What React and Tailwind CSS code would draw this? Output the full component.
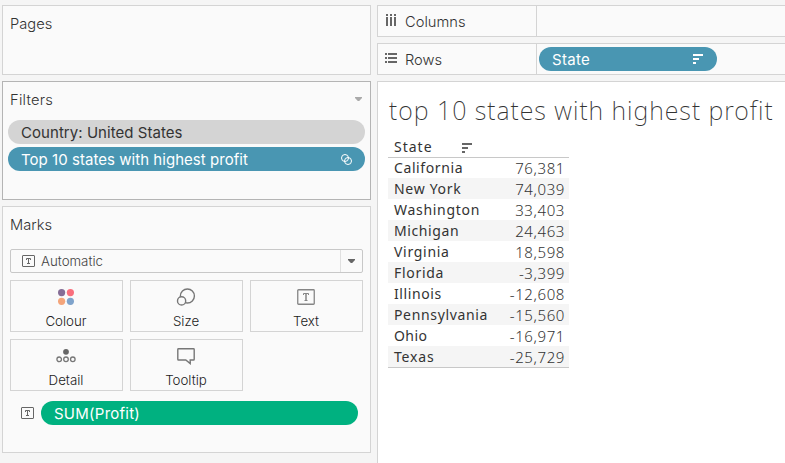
import React from "react";

const rows = [
  ["California", "76,381", "tracking-[0.6px]"],
  ["New York", "74,039", "tracking-[0.7px]"],
  ["Washington", "33,403", "tracking-[0.7px]"],
  ["Michigan", "24,463", "tracking-[0.6px]"],
  ["Virginia", "18,598", "tracking-[0.7px]"],
  ["Florida", "-3,399", "tracking-[0.7px]"],
  ["Illinois", "-12,608", "tracking-[0.6px]"],
  ["Pennsylvania", "-15,560", "tracking-[0.65px]"],
  ["Ohio", "-16,971", "tracking-[0.4px]"],
  ["Texas", "-25,729", "tracking-[0.8px]"],
];

function TextIcon() {
  return (
    <svg width="13" height="12" viewBox="0 0 13 12" fill="none" stroke="#666" className="shrink-0">
      <rect x="0.5" y="0.5" width="12" height="11" rx="0.5" />
      <path d="M4.5 5V3.5H8.5V5M6.5 3.5V8.5M5 8.5H8" />
    </svg>
  );
}

function BigTextIcon() {
  return (
    <svg width="18" height="16" viewBox="0 0 18 16" fill="none" stroke="#858585">
      <rect x="0.75" y="0.75" width="16.5" height="14.5" rx="0.8" strokeWidth="1.3" />
      <path d="M6.5 6V4.5H11.5V6M7.5 11.5H10.5" />
      <path d="M9 4.5V11.5" strokeWidth="1.5" />
    </svg>
  );
}

function SortIcon({ color, className = "" }) {
  return (
    <svg width="10" height="10" viewBox="0 0 10 10" fill={color} className={`shrink-0 ${className}`} shapeRendering="crispEdges">
      <path d="M0 0h10v2H0zM0 4h6v2H0zM0 8h3v2H0z" />
    </svg>
  );
}

function ColourIcon() {
  return (
    <svg width="18" height="18" viewBox="0 0 18 18">
      <circle cx="4.6" cy="4.6" r="3.6" fill="#856d96" />
      <circle cx="13.4" cy="4.6" r="3.6" fill="#f96f7d" />
      <circle cx="4.6" cy="13.3" r="3.6" fill="#f4a57b" />
      <circle cx="13.4" cy="13.3" r="3.6" fill="#7fa3cb" />
    </svg>
  );
}

function SizeIcon() {
  return (
    <svg width="20" height="18" viewBox="0 0 20 18" stroke="#777" strokeWidth="1.4" fill="#fafafa">
      <circle cx="11.4" cy="8" r="7" />
      <circle cx="5.6" cy="12.9" r="4.1" />
    </svg>
  );
}

function DetailIcon() {
  return (
    <svg width="20" height="16" viewBox="0 0 20 16" fill="none" stroke="#777" strokeWidth="1.3">
      <circle cx="10" cy="3.8" r="2.9" fill="#666" stroke="none" />
      <circle cx="3.2" cy="11.3" r="2.3" />
      <circle cx="10" cy="11.3" r="2.3" />
      <circle cx="16.8" cy="11.3" r="2.3" />
    </svg>
  );
}

function TooltipIcon() {
  return (
    <svg width="18" height="17" viewBox="0 0 18 17" fill="none" stroke="#777" strokeWidth="1.4">
      <path d="M1.5 0.8H16.5Q17.2 .8 17.2 1.5V11.2Q17.2 12 16.5 12H13.2V15.6L8.8 12H1.5Q.8 12 .8 11.2V1.5Q.8 .8 1.5 .8Z" />
    </svg>
  );
}

function ColumnsIcon() {
  return (
    <svg width="10" height="12" viewBox="0 0 10 12" fill="#666" shapeRendering="crispEdges" className="-mt-0.5">
      <path d="M0 0h2v2H0zM4 0h2v2H4zM8 0h2v2H8zM0 3h2v9H0zM4 3h2v9H4zM8 3h2v9H8z" />
    </svg>
  );
}

function RowsIcon() {
  return (
    <svg width="12" height="10" viewBox="0 0 12 10" fill="#666" shapeRendering="crispEdges" className="-mt-0.5">
      <path d="M0 0h2v2H0zM0 4h2v2H0zM0 8h2v2H0zM3 0h9v2H3zM3 4h9v2H3zM3 8h9v2H3z" />
    </svg>
  );
}

function Caret({ color }) {
  return (
    <svg width="7" height="4" viewBox="0 0 7 4" fill={color} className="shrink-0">
      <path d="M0 0H7V1L4.2 4H2.8L0 1Z" />
    </svg>
  );
}

function MarkButton({ icon, label }) {
  return (
    <div className="flex h-[52px] flex-col items-center border border-[#d4d4d4] pr-px">
      <div className="flex h-8 w-full items-center justify-center">{icon}</div>
      <div className="text-[13.3px] font-[350] leading-4 text-[#222]">{label}</div>
    </div>
  );
}

export default function App() {
  return (
    <div className="flex h-[463px] w-[785px] gap-1.5 overflow-hidden bg-[#f5f5f5] pl-0.5 pt-[5px] font-['Inter',sans-serif] whitespace-nowrap text-[#333]">
      <aside className="flex w-[369px] shrink-0 flex-col gap-1.5">
        <section className="h-[70px] border border-[#d4d4d4] bg-[#fafafa] pl-[7px] pt-2">
          <h2 className="text-[14.7px] font-light leading-5">Pages</h2>
        </section>

        <section className="h-[119px] border border-[#b4b4b4] bg-[#fafafa] px-[5px] pt-2">
          <div className="flex h-[30px] items-start justify-between pl-0.5 pr-[3px]">
            <h2 className="text-[14.7px] font-light leading-5 tracking-[0.25px]">Filters</h2>
            <div className="pt-[7px]"><Caret color="#aaa" /></div>
          </div>
          <div className="flex flex-col gap-[3px]">
            <div className="flex h-6 items-center rounded-full bg-[#d4d4d4] pl-[13px] text-[15px] font-[420] tracking-[0.05px]">
              <span className="pt-0.5">Country: United States</span>
            </div>
            <div className="flex h-6 items-center justify-between rounded-full bg-[#4996b2] pl-[13px] pr-[13px] text-[15px] font-[420] tracking-[0.04px] text-white">
              <span className="pt-0.5">Top 10 states with highest profit</span>
              <svg width="11" height="11" viewBox="0 0 11 11" fill="none" stroke="#fff" strokeWidth="1">
                <circle cx="4" cy="4" r="3.5" />
                <circle cx="7" cy="7" r="3.5" />
              </svg>
            </div>
          </div>
        </section>

        <section className="h-[247px] border border-[#d4d4d4] bg-[#fafafa] px-[7px] pt-2">
          <h2 className="text-[14.7px] font-light leading-5">Marks</h2>
          <div className="mt-3.5 flex h-6 items-center rounded-[2px] border border-[#c8c8c8] pl-[11px]">
            <TextIcon />
            <span className="ml-1.5 flex-1 text-[13.3px] font-light leading-5 text-[#444]">Automatic</span>
            <div className="flex h-full w-[22px] items-center justify-center border-l border-[#e0e0e0]"><Caret color="#666" /></div>
          </div>
          <div className="mt-[7px] grid grid-cols-[113px_113px_113px] gap-[7px]">
            <MarkButton icon={<ColourIcon />} label="Colour" />
            <MarkButton icon={<SizeIcon />} label="Size" />
            <MarkButton icon={<BigTextIcon />} label="Text" />
            <MarkButton icon={<DetailIcon />} label="Detail" />
            <MarkButton icon={<TooltipIcon />} label="Tooltip" />
          </div>
          <div className="mt-2.5 flex items-center pl-[11px] pr-[5px]">
            <TextIcon />
            <div className="ml-[7px] flex h-6 flex-1 items-center rounded-full bg-[#00b180] pl-[13px] text-[15px] font-[420] tracking-[0.25px] text-white">
              <span className="pt-0.5">SUM(Profit)</span>
            </div>
          </div>
        </section>
      </aside>

      <main className="flex min-w-0 flex-1 flex-col gap-1.5">
        <div className="flex h-8 shrink-0 border-y border-l border-[#d4d4d4] bg-[#fafafa]">
          <div className="flex w-[159px] items-center border-r border-[#d4d4d4] pl-2">
            <ColumnsIcon />
            <span className="ml-[9px] pt-0.5 text-[14.7px] font-light">Columns</span>
          </div>
        </div>
        <div className="flex h-8 shrink-0 border-y border-l border-[#d4d4d4] bg-[#fafafa]">
          <div className="flex w-[159px] items-center border-r border-[#d4d4d4] pl-[7px]">
            <RowsIcon />
            <span className="ml-2 pt-0.5 text-[14.7px] font-light">Rows</span>
          </div>
          <div className="ml-0.5 mt-[3px] flex h-6 w-[178px] items-center justify-between rounded-full bg-[#4996b2] pl-[13px] pr-3.5 text-[15px] font-[420] tracking-[0.3px] text-white">
            <span className="pt-0.5">State</span>
            <SortIcon color="#fff" />
          </div>
        </div>
        <div className="flex-1 border-l border-t border-[#d4d4d4] bg-white pl-2.5 pt-2.5 font-['Noto_Sans',sans-serif]">
          <h1 className="h-[39px] pl-px text-[25px] font-[240] leading-[37px] tracking-[0.98px]">top 10 states with highest profit</h1>
          <div className="w-[181px] border-b border-[#c8c8c8]">
            <div className="flex h-[27px] items-center border-b border-[#c8c8c8] pl-1.5 pt-1">
              <span className="w-[68px] pt-px text-[14px] font-[440] tracking-[1px]">State</span>
              <SortIcon color="#666" className="mt-1" />
            </div>
            {rows.map(([name, value, spacing], i) => (
              <div key={name} className={`flex items-center justify-between pl-1.5 pr-1 text-[14px] leading-[20px] ${i ? "h-[21px]" : "h-5"} ${i % 2 ? "bg-[#f5f5f5]" : ""}`}>
                <span className={`font-[440] ${spacing}`}>{name}</span>
                <span className="text-[15px] font-light tracking-[0.6px] text-[#333]">{value}</span>
              </div>
            ))}
          </div>
        </div>
      </main>
    </div>
  );
}
